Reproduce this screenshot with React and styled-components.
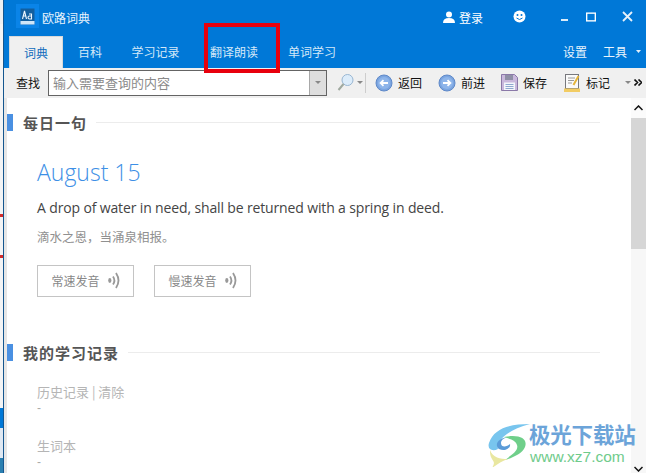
import React from 'react';
import styled, { createGlobalStyle } from 'styled-components';

const Global = createGlobalStyle`
  html, body { margin: 0; padding: 0; width: 646px; height: 473px; overflow: hidden; background: #fff; }
  #root { width: 646px; height: 473px; }
  * { box-sizing: border-box; }
`;

const CJK = `"Noto Sans CJK SC", "Noto Sans", sans-serif`;

const Desktop = styled.div`
  position: relative; width: 646px; height: 473px; display: flex; overflow: hidden;
  font-family: ${CJK};
`;
const Backdrop = styled.div`
  width: 3px; flex: none; display: flex; flex-direction: column; background: #f4f5f6;
`;
const BackdropBand = styled.div`
  flex: none; height: ${p => p.$h}px; background: ${p => p.$c};
`;
const Window = styled.div`
  flex: 1; min-width: 0; display: flex; flex-direction: column;
  border-left: 1px solid #14568f;
`;
const TitleBar = styled.div`
  height: 35px; flex: none; background: #0078d7; display: flex; align-items: center;
  color: #fff; padding-left: 12px;
`;
const AppIcon = styled.div`
  width: 23px; height: 24px; margin-top: -3px; background: #0a84e8; display: flex; align-items: center; justify-content: center;
`;
const AppName = styled.div`
  font-size: 12px; margin-left: 3px; margin-top: -1px; color: #e8f3fc;
`;
const Spacer = styled.div` flex: 1; `;
const LoginBox = styled.div`
  display: flex; align-items: center; gap: 4px; font-size: 12px; margin-right: 30px; margin-top: -1px;
`;
const WinButton = styled.div`
  width: ${p => p.$w}px; margin-left: ${p => p.$ml || 0}px; margin-right: ${p => p.$mr || 0}px;
  display: flex; justify-content: center; align-items: center; margin-top: -2px;
`;
const TabBar = styled.div`
  height: 33px; flex: none; background: #0078d7; display: flex; align-items: flex-end; padding-left: 5px; color: #fff;
`;
const Tab = styled.div`
  height: 32px; width: ${p => p.$w}px; display: flex; align-items: center; justify-content: center;
  font-size: 12px; padding-bottom: 1px;
  ${p => p.$active ? `background:#f0f0f0;color:#0f6cbd;border:1px solid #d9d9d9;border-bottom:0;` : `color:#d5e8f8;`}
`;
const TabRight = styled.div`
  font-size: 12px; margin-right: ${p => p.$mr}px; padding-bottom: 8px; color: #e8f3fc; display: flex; align-items: center; gap: 9px;
`;
const Toolbar = styled.div`
  height: 30px; flex: none; background: #f0f0f0; display: flex; align-items: center; padding-left: 12px; padding-bottom: 1px; font-size: 12px; color: #111;
`;
const ToolLabel = styled.div` width: 32px; flex: none; `;
const SearchCombo = styled.div`
  width: 279px; height: 26px; flex: none; background: #fff; border: 1px solid #646464; display: flex; align-items: center;
  font-size: 13px; color: #8a8a8a; padding-left: 4px;
`;
const ComboArrow = styled.div`
  margin-left: auto; width: 17px; height: 24px; background: #dedede; border-left: 1px solid #a8a8a8; display: flex; align-items: center; justify-content: center;
`;
const TinyCaret = styled.div`
  width: 0; height: 0; border-left: 3px solid transparent; border-right: 3px solid transparent; border-top: 3px solid #888;
`;
const SearchGlass = styled.div`
  margin-left: 10px; display: flex; align-items: center; gap: 3px; width: 28px; flex: none;
`;
const Divider = styled.div`
  width: 1px; height: 20px; background: #cdcdcd; margin: 0 9px 0 0; flex: none;
`;
const ToolItem = styled.div`
  display: flex; align-items: center; gap: 5px; flex: none; width: ${p => p.$w}px;
`;
const Body = styled.div`
  flex: 1; min-height: 0; display: flex; border-left: 3px solid #e6e6e6; background: #fff;
`;
const Content = styled.div`
  flex: 1; min-width: 0; display: flex; flex-direction: column; padding-top: 16px;
`;
const SectionHead = styled.div`
  display: flex; align-items: center; height: 17px; margin-top: ${p => p.$mt || 0}px;
`;
const SectionMark = styled.div`
  width: 6px; height: 17px; background: #4a90e2; flex: none;
`;
const SectionTitle = styled.div`
  font-size: 15px; font-weight: 700; color: #555; margin-left: 10px; letter-spacing: 1px; white-space: nowrap;
`;
const SectionRule = styled.div`
  flex: 1; height: 1px; background: #ececec; margin-left: 9px; margin-right: 31px;
`;
const Daily = styled.div`
  padding: 26px 0 0 30px; display: flex; flex-direction: column;
`;
const DateTitle = styled.div`
  font-family: "Open Sans", sans-serif; font-weight: 300; font-size: 23px; line-height: 30px; color: #3d8fe6;
`;
const Sentence = styled.div`
  font-family: "Open Sans", sans-serif; font-size: 14px; line-height: 20px; color: #444; margin-top: 11px; letter-spacing: -.14px;
`;
const Translation = styled.div`
  font-size: 12.500px; line-height: 18px; color: #909090; margin-top: 10px;
`;
const Buttons = styled.div`
  display: flex; gap: 20px; margin-top: 19px;
`;
const SoundButton = styled.div`
  width: 97px; height: 32px; border: 1px solid #c4c4c4; display: flex; align-items: center; justify-content: center; gap: 8px;
  font-size: 12px; color: #888; padding-bottom: 1px;
`;
const Records = styled.div`
  padding: 21px 0 0 30px; display: flex; flex-direction: column;
`;
const RecordTitle = styled.div`
  font-size: 13px; line-height: 19px; color: #b5b5b5; margin-top: ${p => p.$mt || 0}px;
`;
const RecordValue = styled.div`
  font-family: "Liberation Sans", sans-serif; font-size: 12px; line-height: 14px; color: #aaa;
`;
const ScrollBar = styled.div`
  width: 15px; flex: none; background: #f7f7f7; display: flex; flex-direction: column; align-items: center;
`;
const ScrollEnd = styled.div`
  height: ${p => p.$h}px; flex: none; display: flex; align-items: center; justify-content: center; width: 100%;
  background: ${p => p.$bg || 'transparent'};
`;
const ScrollThumb = styled.div`
  height: 131px; width: 100%; background: #d6d6d6; flex: none;
`;
const ScrollRest = styled.div` flex: 1; `;
const Highlight = styled.div`
  position: absolute; left: 204px; top: 23px; width: 76px; height: 50px; border: 4px solid #e8000d; pointer-events: none;
`;
const Watermark = styled.div`
  position: absolute; left: 486px; top: 421px; width: 150px; height: 46px; display: flex; pointer-events: none;
`;
const WatermarkLogo = styled.div`
  width: 44px; flex: none; margin-top: 2px;
`;
const WatermarkText = styled.div`
  display: flex; flex-direction: column; margin-left: -1px;
`;
const WatermarkName = styled.div`
  font-size: 21.500px; font-weight: 700; line-height: 26px; color: #6ca4d9; white-space: nowrap; letter-spacing: -.2px;
`;
const WatermarkUrl = styled.div`
  font-family: "Liberation Sans", sans-serif; font-size: 15.500px; line-height: 18px; color: #6fcb8b; white-space: nowrap; margin-top: 1px; margin-left: 1px;
`;

const Speaker = () => (
  <svg width="12" height="17" viewBox="0 0 12 17" fill="none" stroke="#999" strokeWidth="1.800">
    <ellipse cx="1.800" cy="8.500" rx="1.600" ry="2.400" fill="#999" stroke="none" />
    <path d="M5 4.500q2.800 4 0 8" />
    <path d="M8 1q5 7.500 0 15" />
  </svg>
);
const ArrowCircle = ({ left }) => (
  <svg width="18" height="18" viewBox="0 0 18 18">
    <circle cx="9" cy="9" r="8" fill="#7ba5e0" stroke="#5e88c8" />
    <circle cx="9" cy="9" r="6" fill="#8eb5ea" />
    <path d={left ? 'M13 9H6M8.500 6.200 5.600 9l2.900 2.800' : 'M5 9h7M9.500 6.200 12.400 9l-2.900 2.800'} stroke="#fff" strokeWidth="1.800" fill="none" />
  </svg>
);

export default function App() {
  return (
    <Desktop>
      <Global />
      <Backdrop>
        <BackdropBand $h={24} $c="#eceff2" />
        <BackdropBand $h={190} $c="#f3f4f5" />
        <BackdropBand $h={3} $c="#d22b2b" />
        <BackdropBand $h={38} $c="#f3f4f5" />
        <BackdropBand $h={3} $c="#d22b2b" />
        <BackdropBand $h={150} $c="#f3f4f5" />
        <BackdropBand $h={20} $c="#0078d7" />
        <BackdropBand $h={30} $c="#dfe8f2" />
        <BackdropBand $h={15} $c="#2a7fb0" />
      </Backdrop>
      <Window>
        <TitleBar>
          <AppIcon>
            <svg width="15" height="17" viewBox="0 0 15 17">
              <rect x="0.500" y="0.500" width="14" height="16" fill="#125f9f" />
              <rect x="0.500" y="13" width="14" height="3.500" fill="#cfe6f8" />
              <path d="M2.500 11 4.500 3 6.500 11M3.300 8h2.500M9 6h2.500v5H9.500Q8 11 8 9.500T9.500 8H11.500" stroke="#eef7ff" strokeWidth="1.100" fill="none" />
            </svg>
          </AppIcon>
          <AppName>欧路词典</AppName>
          <Spacer />
          <LoginBox>
            <svg width="12" height="12" viewBox="0 0 12 12" fill="#fff">
              <circle cx="6" cy="3.500" r="3" />
              <path d="M0 12q0-5 6-5t6 5z" />
            </svg>
            登录
          </LoginBox>
          <WinButton $w={13}>
            <svg width="13" height="13" viewBox="0 0 13 13">
              <circle cx="6.500" cy="6.500" r="6" fill="#fff" />
              <circle cx="4.500" cy="5" r="1" fill="#0078d7" />
              <circle cx="8.500" cy="5" r="1" fill="#0078d7" />
              <path d="M3.500 8q3 3 6 0" stroke="#0078d7" fill="none" />
            </svg>
          </WinButton>
          <WinButton $w={26} $ml={26}>
            <svg width="8" height="10" viewBox="0 0 8 10"><rect y="7" width="7" height="2" fill="#dcecf9" /></svg>
          </WinButton>
          <WinButton $w={10} $ml={8}>
            <svg width="11" height="10" viewBox="0 0 11 10"><rect x="0.750" y="0.750" width="9.500" height="8.500" fill="none" stroke="#fff" strokeWidth="1.500" /></svg>
          </WinButton>
          <WinButton $w={11} $ml={26} $mr={13}>
            <svg width="11" height="11" viewBox="0 0 11 11"><path d="M1 1l9 9M10 1l-9 9" stroke="#e6f1fa" strokeWidth="1.800" /></svg>
          </WinButton>
        </TitleBar>
        <TabBar>
          <Tab $active $w={54}>词典</Tab>
          <Tab $w={54}>百科</Tab>
          <Tab $w={77}>学习记录</Tab>
          <Tab $w={80}>翻译朗读</Tab>
          <Tab $w={76}>单词学习</Tab>
          <Spacer />
          <TabRight $mr={16}>设置</TabRight>
          <TabRight $mr={5}>
            工具
            <svg width="5" height="3" viewBox="0 0 5 3"><path d="M0 0h5L2.500 3z" fill="#e3eff9" /></svg>
          </TabRight>
        </TabBar>
        <Toolbar>
          <ToolLabel>查找</ToolLabel>
          <SearchCombo>
            输入需要查询的内容
            <ComboArrow><TinyCaret /></ComboArrow>
          </SearchCombo>
          <SearchGlass>
            <svg width="17" height="19" viewBox="0 0 17 19" fill="none">
              <circle cx="10.500" cy="7" r="5.500" fill="#dcecfa" stroke="#98b6d2" />
              <path d="M6.500 11 1.500 17" stroke="#a0a99f" strokeWidth="2" />
            </svg>
            <TinyCaret />
          </SearchGlass>
          <Divider />
          <ToolItem $w={63}><ArrowCircle left />返回</ToolItem>
          <ToolItem $w={63}><ArrowCircle />前进</ToolItem>
          <ToolItem $w={63}>
            <svg width="17" height="17" viewBox="0 0 17 17">
              <path d="M.5.500h13l3 3v13H.5z" fill="#c9b8dc" stroke="#8b79a8" />
              <rect x="4" y="1" width="8" height="5" fill="#8f8fa6" />
              <rect x="3" y="8.500" width="11" height="7.500" fill="#f4f6fb" />
              <path d="M4.500 10.500h8M4.500 12.500h8M4.500 14.500h8" stroke="#8fa9cf" />
            </svg>
            保存
          </ToolItem>
          <ToolItem $w={61}>
            <svg width="17" height="18" viewBox="0 0 17 18">
              <rect x="1.500" y="0.500" width="13" height="14" fill="#fafafa" stroke="#77787d" />
              <path d="M4 4h7M4 6.500h6M4 9h4" stroke="#9a9a9a" />
              <path d="M14.500 2 9.500 11" stroke="#e5b53a" strokeWidth="2" />
              <rect y="14.500" width="16" height="3.500" fill="#f2cc63" />
            </svg>
            标记
          </ToolItem>
          <TinyCaret />
          <svg width="8" height="7" viewBox="0 0 8 7" style={{ marginLeft: 3 }} fill="none" stroke="#111" strokeWidth="1.600">
            <path d="M.5.500 3.500 3.500.5 6.500M4.500.5l3 3-3 3" />
          </svg>
        </Toolbar>
        <Body>
          <Content>
            <SectionHead>
              <SectionMark />
              <SectionTitle>每日一句</SectionTitle>
              <SectionRule />
            </SectionHead>
            <Daily>
              <DateTitle>August 15</DateTitle>
              <Sentence>A drop of water in need, shall be returned with a spring in deed.</Sentence>
              <Translation>滴水之恩，当涌泉相报。</Translation>
              <Buttons>
                <SoundButton>常速发音<Speaker /></SoundButton>
                <SoundButton>慢速发音<Speaker /></SoundButton>
              </Buttons>
            </Daily>
            <SectionHead $mt={47}>
              <SectionMark />
              <SectionTitle>我的学习记录</SectionTitle>
              <SectionRule />
            </SectionHead>
            <Records>
              <RecordTitle>历史记录 | 清除</RecordTitle>
              <RecordValue>-</RecordValue>
              <RecordTitle $mt={21}>生词本</RecordTitle>
              <RecordValue>-</RecordValue>
            </Records>
          </Content>
          <ScrollBar>
            <ScrollEnd $h={20} $bg="#fbfbfb">
              <svg width="9" height="6" viewBox="0 0 9 6" fill="none" stroke="#111" strokeWidth="1.500"><path d="M.5 5 4.500 1 8.500 5" /></svg>
            </ScrollEnd>
            <ScrollThumb />
            <ScrollRest />
            <ScrollEnd $h={8}>
              <svg width="9" height="6" viewBox="0 0 9 6" fill="none" stroke="#111" strokeWidth="1.500"><path d="M.5 1l4 4 4-4" /></svg>
            </ScrollEnd>
          </ScrollBar>
        </Body>
      </Window>
      <Highlight />
      <Watermark>
        <WatermarkLogo>
          <svg width="44" height="44" viewBox="0 0 44 44" fill="none">
            <path d="M44 1C24 1 8 5 3 20c-2 6 3 9 9 6C10 20 18 8 44 1z" fill="#78c5ee" />
            <path d="M22 14C12 15 8 22 13 26c6 3 12-1 11-5-3 3-9 4-9-1 0-3 3-5 7-6z" fill="#5a9bd8" />
            <path d="M18 14c16-3 24 2 21 10-3 7-13 11-20 13 6-5 14-9 12-15-1-4-6-6-13-8z" fill="#6fcf8a" />
            <path d="M4 27c3 8 10 9 18 9-6 2-10 5-16 9 3-5 2-6 0-9-2-3-2-6-2-9z" fill="#e9e7a0" />
          </svg>
        </WatermarkLogo>
        <WatermarkText>
          <WatermarkName>极光下载站</WatermarkName>
          <WatermarkUrl>www.xz7.com</WatermarkUrl>
        </WatermarkText>
      </Watermark>
    </Desktop>
  );
}
